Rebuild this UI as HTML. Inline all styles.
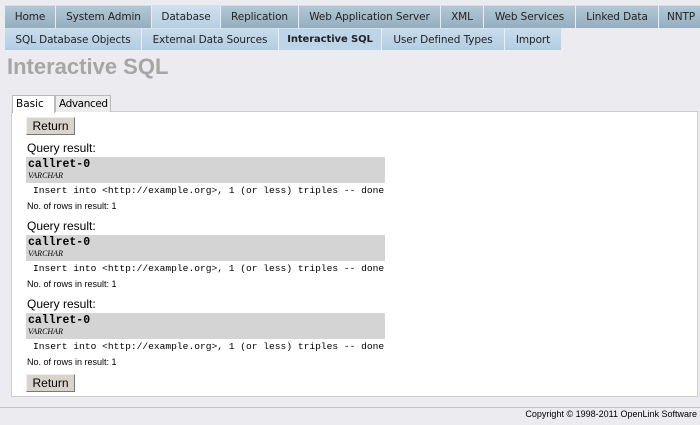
<!DOCTYPE html>
<html><head><style>
*{margin:0;padding:0;box-sizing:border-box}
body{width:700px;height:425px;background:#ebebf0;font-family:"DejaVu Sans",Verdana,sans-serif;position:relative;overflow:hidden}
.t{position:absolute;font-size:10.5px;letter-spacing:-0.1px;color:#222;text-align:center;border-right:1px solid #e8eef2;border-top:1px solid #d6e0e8;white-space:nowrap;overflow:hidden}
.r1{top:5px;height:23px;line-height:23px;background:linear-gradient(#b3c8d6,#94aec0)}
.r1.s{background:linear-gradient(#cfe0ee,#b6cfe2)}
.r2{top:28px;height:22px;line-height:22px;background:linear-gradient(#c8dcec,#b2cde2)}
.r2.s{font-weight:bold;background:#bdd5e8;font-size:10px}
h1{position:absolute;left:7px;top:54px;font:bold 22px "Liberation Sans",Arial,sans-serif;color:#a6a6a6}
.tab{position:absolute;top:95px;height:17px;font:10.5px "DejaVu Sans",sans-serif;line-height:16px;padding:0 3px;border:1px solid #bbb;border-bottom:none;white-space:nowrap}
.panel{position:absolute;left:11px;top:111px;width:687px;height:286px;background:#fff;border:1px solid #ccc}
.btn{position:absolute;left:26px;width:49px;height:18px;background:#d8d4cc;border:1px solid #777;border-top-color:#eee;border-left-color:#eee;font:12px "Liberation Sans",Arial,sans-serif;text-align:center;line-height:16px}
.q{position:absolute;left:27px;font:12px "Liberation Sans",Arial,sans-serif}
.g{position:absolute;left:26px;width:359px;height:26px;background:#d4d4d4}
.g b{position:absolute;left:2px;top:1px;font:bold 11.5px "Liberation Mono",monospace}
.g i{position:absolute;left:2px;top:14px;font:italic 8px "Liberation Serif",serif}
.m{position:absolute;left:33px;font:9.6px "Liberation Mono",monospace;white-space:pre}
.n{position:absolute;left:27px;font:9px "Liberation Sans",Arial,sans-serif}
</style></head><body>
<div class="t r1" style="left:5px;width:51px">Home</div>
<div class="t r1" style="left:56px;width:96px">System Admin</div>
<div class="t r1 s" style="left:152px;width:69px">Database</div>
<div class="t r1" style="left:221px;width:78px">Replication</div>
<div class="t r1" style="left:299px;width:142px">Web Application Server</div>
<div class="t r1" style="left:441px;width:43px">XML</div>
<div class="t r1" style="left:484px;width:92px">Web Services</div>
<div class="t r1" style="left:576px;width:83px">Linked Data</div>
<div class="t r1" style="left:659px;width:45px">NNTP</div>
<div class="t r2" style="left:5px;width:137px">SQL Database Objects</div>
<div class="t r2" style="left:142px;width:137px">External Data Sources</div>
<div class="t r2 s" style="left:279px;width:103px">Interactive SQL</div>
<div class="t r2" style="left:382px;width:123px">User Defined Types</div>
<div class="t r2" style="left:505px;width:57px">Import</div>
<h1>Interactive SQL</h1>
<div class="panel"></div>
<div class="tab" style="left:12px;background:#fff;width:43px;height:18px">Basic</div>
<div class="tab" style="left:55px;background:#ececec;width:56px;letter-spacing:-0.4px">Advanced</div>
<div class="btn" style="top:117px">Return</div>
<div class="q" style="top:141px">Query result:</div>
<div class="g" style="top:157px"><b>callret-0</b><i>VARCHAR</i></div>
<div class="m" style="top:185px">Insert into &lt;http://example.org&gt;, 1 (or less) triples -- done</div>
<div class="n" style="top:201px">No. of rows in result: 1</div>
<div class="q" style="top:219px">Query result:</div>
<div class="g" style="top:235px"><b>callret-0</b><i>VARCHAR</i></div>
<div class="m" style="top:263px">Insert into &lt;http://example.org&gt;, 1 (or less) triples -- done</div>
<div class="n" style="top:279px">No. of rows in result: 1</div>
<div class="q" style="top:297px">Query result:</div>
<div class="g" style="top:313px"><b>callret-0</b><i>VARCHAR</i></div>
<div class="m" style="top:341px">Insert into &lt;http://example.org&gt;, 1 (or less) triples -- done</div>
<div class="n" style="top:357px">No. of rows in result: 1</div>
<div class="btn" style="top:374px">Return</div>
<div style="position:absolute;left:0;top:407px;width:700px;border-top:1px solid #c4c4c8"></div>
<div style="position:absolute;right:3px;top:409px;font:9px 'Liberation Sans',Arial,sans-serif">Copyright © 1998-2011 OpenLink Software</div>
</body></html>
